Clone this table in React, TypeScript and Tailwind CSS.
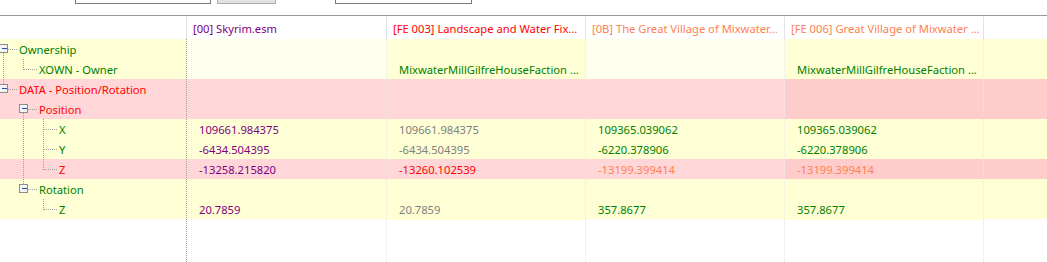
import React from 'react';

type Bg = 'y' | 'l' | 'p' | 'd';

const bgClass: Record<Bg, string> = {
  y: 'bg-[#ffffd5]',
  l: 'bg-[#ffffee]',
  p: 'bg-[#ffd7d9]',
  d: 'bg-[#ffcccc]',
};

const headers = [
  { text: '[00] Skyrim.esm', color: 'text-[#800080]' },
  { text: '[FE 003] Landscape and Water Fix...', color: 'text-[#ff0000]' },
  { text: '[0B] The Great Village of Mixwater...', color: 'text-[#ff7f50]' },
  { text: '[FE 006] Great Village of Mixwater ...', color: 'text-[#ff7f50]' },
];

type Line = [number, number, number, number];
type Row = {
  label: string;
  labelColor: string;
  indent: number;
  box?: number;
  lines: Line[];
  bgs: Bg[];
  cells: { text: string; color: string }[];
  darkBottom?: boolean;
};

const purple = 'text-[#800080]';
const gray = 'text-[#808080]';
const green = 'text-[#008000]';
const red = 'text-[#ff0000]';
const salmon = 'text-[#ff7f50]';
const empty = { text: '', color: '' };

const rows: Row[] = [
  {
    label: 'Ownership', labelColor: green, indent: 19, box: 3.5,
    lines: [[3.5, 14, 3.5, 20], [8, 10.5, 17, 10.5]],
    bgs: ['y', 'l', 'y', 'l', 'y', 'y'],
    cells: [empty, empty, empty, empty],
  },
  {
    label: 'XOWN - Owner', labelColor: green, indent: 39,
    lines: [[3.5, 0, 3.5, 20], [23.5, 0, 23.5, 10.5], [23.5, 10.5, 37, 10.5]],
    bgs: ['y', 'l', 'y', 'l', 'y', 'y'],
    cells: [empty, { text: 'MixwaterMillGilfreHouseFaction ...', color: green }, empty, { text: 'MixwaterMillGilfreHouseFaction ...', color: green }],
    darkBottom: true,
  },
  {
    label: 'DATA - Position/Rotation', labelColor: red, indent: 19, box: 3.5,
    lines: [[3.5, 0, 3.5, 5], [8, 10.5, 17, 10.5]],
    bgs: ['p', 'p', 'p', 'p', 'd', 'd'],
    cells: [empty, empty, empty, empty],
  },
  {
    label: 'Position', labelColor: red, indent: 39, box: 23.5,
    lines: [[23.5, 14, 23.5, 20], [28, 10.5, 37, 10.5]],
    bgs: ['p', 'p', 'p', 'p', 'd', 'd'],
    cells: [empty, empty, empty, empty],
  },
  {
    label: 'X', labelColor: green, indent: 59,
    lines: [[23.5, 0, 23.5, 20], [43.5, 0, 43.5, 20], [43.5, 10.5, 57, 10.5]],
    bgs: ['y', 'y', 'y', 'y', 'y', 'y'],
    cells: [
      { text: '109661.984375', color: purple },
      { text: '109661.984375', color: gray },
      { text: '109365.039062', color: green },
      { text: '109365.039062', color: green },
    ],
  },
  {
    label: 'Y', labelColor: green, indent: 59,
    lines: [[23.5, 0, 23.5, 20], [43.5, 0, 43.5, 20], [43.5, 10.5, 57, 10.5]],
    bgs: ['y', 'y', 'y', 'y', 'y', 'y'],
    cells: [
      { text: '-6434.504395', color: purple },
      { text: '-6434.504395', color: gray },
      { text: '-6220.378906', color: green },
      { text: '-6220.378906', color: green },
    ],
  },
  {
    label: 'Z', labelColor: red, indent: 59,
    lines: [[23.5, 0, 23.5, 20], [43.5, 0, 43.5, 10.5], [43.5, 10.5, 57, 10.5]],
    bgs: ['p', 'p', 'p', 'p', 'd', 'd'],
    cells: [
      { text: '-13258.215820', color: purple },
      { text: '-13260.102539', color: red },
      { text: '-13199.399414', color: salmon },
      { text: '-13199.399414', color: salmon },
    ],
  },
  {
    label: 'Rotation', labelColor: green, indent: 39, box: 23.5,
    lines: [[23.5, 0, 23.5, 5], [28, 10.5, 37, 10.5]],
    bgs: ['y', 'y', 'y', 'y', 'y', 'y'],
    cells: [empty, empty, empty, empty],
  },
  {
    label: 'Z', labelColor: green, indent: 59,
    lines: [[43.5, 0, 43.5, 10.5], [43.5, 10.5, 57, 10.5]],
    bgs: ['y', 'y', 'y', 'y', 'y', 'y'],
    cells: [
      { text: '20.7859', color: purple },
      { text: '20.7859', color: gray },
      { text: '357.8677', color: green },
      { text: '357.8677', color: green },
    ],
  },
];

const cols = 'grid grid-cols-[187px_200px_199px_199px_199px_1fr]';

function TreeGuides({ row }: { row: Row }) {
  return (
    <svg width={row.indent} height={20} className="shrink-0 overflow-visible" shapeRendering="crispEdges">
      {row.lines.map(([x1, y1, x2, y2], i) => (
        <line key={i} x1={x1} y1={y1} x2={x2} y2={y2} stroke="#a0a0a0" strokeDasharray="1 1" />
      ))}
      {row.box !== undefined && (
        <g>
          <rect x={row.box - 4} y={5.5} width={8} height={8} fill="#f4f4f4" stroke="#8c8c8c" />
          <line x1={row.box - 2} y1={9.5} x2={row.box + 3} y2={9.5} stroke="#2b4ea8" />
        </g>
      )}
    </svg>
  );
}

export default function App() {
  return (
    <div
      className="h-[262px] w-[1047px] overflow-hidden bg-white flex flex-col text-[11.2px] leading-none"
      style={{ fontFamily: '"Noto Sans", "Open Sans", sans-serif' }}
    >
      {/* toolbar, mostly scrolled out of view */}
      <div className="h-4 shrink-0 border-b border-[#9a9a9a] overflow-hidden">
        <div className="flex items-end h-[23px] -mt-[19px] text-[12px] leading-none text-black">
          <span className="w-[75px] pl-[20px] mb-[5px]">by _</span>
          <div className="w-[136px] h-[23px] border border-[#7a7a7a] bg-white" />
          <div className="ml-[6px] w-[59px] h-[23px] border border-[#adadad] bg-[#e1e1e1]" />
          <span className="w-[59px] pl-[10px] mb-[5px]">by _</span>
          <div className="w-[137px] h-[23px] border border-[#7a7a7a] bg-white" />
          <span className="ml-[32px] mb-[5px]">Jump to [ Ctrl+j ]</span>
        </div>
      </div>

      {/* column headers */}
      <div className={`${cols} h-[23px] shrink-0 bg-white`}>
        <div className="border-r border-[#e3e3e3]" />
        {headers.map((h) => (
          <div key={h.text} className={`border-r border-[#e3e3e3] pl-1.5 pt-[2px] flex items-center whitespace-nowrap overflow-hidden ${h.color}`}>
            {h.text}
          </div>
        ))}
        <div />
      </div>

      {/* tree rows */}
      {rows.map((row, ri) => (
        <div key={ri} className={`${cols} h-5 shrink-0`}>
          <div className={`${bgClass[row.bgs[0]]} border-r border-dotted border-[#a0a0a0] border-b ${row.darkBottom ? 'border-b-[#c8c8c8]' : 'border-b-white'} flex items-center whitespace-nowrap`}>
            <TreeGuides row={row} />
            <span className={`${row.labelColor} pt-px`}>{row.label}</span>
          </div>
          {row.cells.map((c, ci) => (
            <div
              key={ci}
              className={`${bgClass[row.bgs[ci + 1]]} border-r border-b border-dotted border-r-[#e8e8e8] ${row.darkBottom ? 'border-b-[#9a9a9a]' : 'border-b-white'} pl-3 pt-px flex items-center whitespace-nowrap overflow-hidden ${c.color}`}
            >
              {c.text}
            </div>
          ))}
          <div className={`${bgClass[row.bgs[5]]} border-b border-dotted ${row.darkBottom ? 'border-b-[#9a9a9a]' : 'border-b-white'}`} />
        </div>
      ))}

      {/* empty space below */}
      <div className={`${cols} flex-1`}>
        <div className="border-r border-dotted border-[#a0a0a0]" />
        <div className="border-r border-dotted border-[#e3e3e3]" />
        <div className="border-r border-dotted border-[#e3e3e3]" />
        <div className="border-r border-dotted border-[#e3e3e3]" />
        <div className="border-r border-dotted border-[#e3e3e3]" />
        <div />
      </div>
    </div>
  );
}
